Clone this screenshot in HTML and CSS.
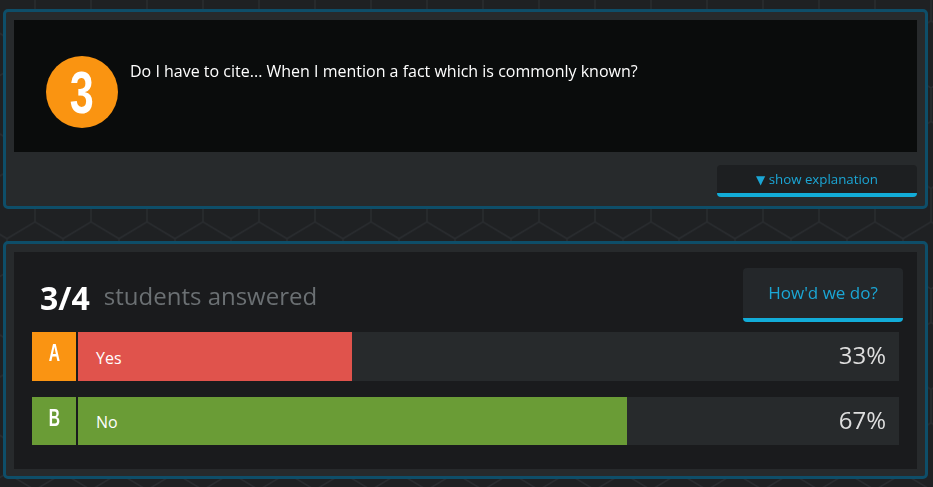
FILE: index.html
```html
<!DOCTYPE html>
<html lang="en">
<head>
<meta charset="utf-8">
<title>Question 3</title>
<link rel="stylesheet" href="styles.css">
</head>
<body>
<svg class="hexbg" aria-hidden="true">
  <defs>
    <pattern id="hex" patternUnits="userSpaceOnUse" x="7" y="-12.5" width="56" height="100.5">
      <path d="M28 0V33.5L0 50.25M28 33.5L56 50.25M0 50.25V83.75L28 100.5M56 50.25V83.75L28 100.5" fill="none" stroke="#2a2d30" stroke-width="1.5"/>
    </pattern>
  </defs>
  <rect width="100%" height="100%" fill="url(#hex)"/>
</svg>

<section class="panel question-panel">
  <div class="question">
    <div class="qnum">
      <span class="qnum-digit">3</span>
    </div>
    <p class="qtext">Do I have to cite... When I mention a fact which is commonly known?</p>
  </div>
  <div class="question-footer">
    <button class="btn btn-explain" type="button"><span class="tri">▼</span> show explanation</button>
  </div>
</section>

<section class="panel results-panel">
  <div class="results">
    <div class="results-head">
      <div class="answered">
        <span class="count">3/4</span>
        <span class="answered-label">students answered</span>
      </div>
      <button class="btn btn-how" type="button">How'd we do?</button>
    </div>
    <div class="bars">
      <div class="bar-row">
        <div class="letter letter-a"><span>A</span></div>
        <div class="track">
          <div class="fill fill-a" style="width:33.4%"></div>
          <span class="label">Yes</span>
          <span class="pct">33%</span>
        </div>
      </div>
      <div class="bar-row">
        <div class="letter letter-b"><span>B</span></div>
        <div class="track">
          <div class="fill fill-b" style="width:66.9%"></div>
          <span class="label">No</span>
          <span class="pct">67%</span>
        </div>
      </div>
    </div>
  </div>
</section>
</body>
</html>
```

FILE: styles.css
```css
* { box-sizing: border-box; }

html, body {
  margin: 0;
  padding: 0;
}

body {
  background: #1f2123;
  font-family: "Open Sans", "DejaVu Sans", sans-serif;
  color: #fff;
  width: 933px;
  height: 487px;
  overflow: hidden;
  padding: 9px 5px 0 3px;
}

.hexbg {
  position: fixed;
  left: 0;
  top: 0;
  width: 100%;
  height: 100%;
  z-index: -1;
}

.panel {
  background: #272a2c;
  border: 3px solid #0e4e69;
  border-radius: 5px;
  padding: 8px;
}

.question-panel {
  padding-bottom: 9px;
}

.question {
  background: #0a0c0c;
  display: flex;
  align-items: flex-start;
  gap: 12px;
  padding: 36px 32px 24px 32px;
}

.qnum {
  width: 72px;
  height: 72px;
  flex: none;
  border-radius: 50%;
  background: #fa9411;
  display: flex;
  align-items: center;
  justify-content: center;
}

.qnum-digit {
  font-family: "Liberation Sans", Arial, sans-serif;
  font-weight: 700;
  font-size: 60px;
  line-height: 1;
  color: #fff;
  transform: scaleX(0.72);
  display: block;
  margin-top: 1px;
}

.qtext {
  margin: 4px 0 0 0;
  font-size: 16px;
  line-height: 22px;
  color: #fff;
}

.question-footer {
  display: flex;
  justify-content: flex-end;
  padding-top: 13px;
}

.btn {
  font-family: "Open Sans", "DejaVu Sans", sans-serif;
  border: none;
  border-bottom: 4px solid #12acd8;
  border-radius: 4px;
  cursor: pointer;
  color: #1ba6d5;
  padding: 0;
}

.btn-explain {
  width: 200px;
  height: 32px;
  background: #1d1f21;
  font-size: 13.3px;
  line-height: 28px;
}

.tri {
  font-family: "DejaVu Sans", sans-serif;
  font-size: 12px;
}

.results-panel {
  margin-top: 32px;
  padding-bottom: 7px;
}

.results {
  background: #1a1b1d;
  padding: 16px 0 24px 0;
}

.results-head {
  display: flex;
  justify-content: space-between;
  align-items: center;
  padding: 0 14px 0 26px;
}

.answered {
  display: flex;
  align-items: baseline;
  gap: 14px;
  margin-top: 6px;
}

.count {
  font-size: 32px;
  font-weight: 700;
  color: #fff;
  line-height: 1;
}

.answered-label {
  font-size: 24px;
  color: #6b7073;
  line-height: 1;
  position: relative;
  top: -5px;
}

.btn-how {
  width: 160px;
  height: 54px;
  background: #24272a;
  font-size: 17px;
  line-height: 1;
  padding-bottom: 2px;
}

.bars {
  display: flex;
  flex-direction: column;
  gap: 16px;
  padding: 10px 18px 0 18px;
}

.bar-row {
  display: flex;
  gap: 2px;
  height: 49px;
}

.bar-row + .bar-row {
  height: 48px;
}

.letter {
  width: 44px;
  flex: none;
  display: flex;
  justify-content: center;
  padding-top: 10px;
}

.letter span {
  font-family: "Liberation Sans", Arial, sans-serif;
  font-weight: 700;
  font-size: 23px;
  line-height: 1;
  color: #fff;
  transform: scaleX(0.68);
  display: block;
}

.letter-a { background: #fa9412; }
.letter-b { background: #6a9c36; }

.track {
  flex: 1;
  position: relative;
  background: #272a2c;
  display: flex;
  align-items: center;
  justify-content: space-between;
  padding: 0 13px 0 18px;
}

.fill {
  position: absolute;
  left: 0;
  top: 0;
  bottom: 0;
}

.fill-a { background: #e0534c; }
.fill-b { background: #6a9c36; }

.label {
  position: relative;
  font-size: 16px;
  color: #fff;
  margin-top: 2px;
}

.pct {
  position: relative;
  font-size: 24px;
  color: #dedede;
  margin-top: -4px;
}
```
